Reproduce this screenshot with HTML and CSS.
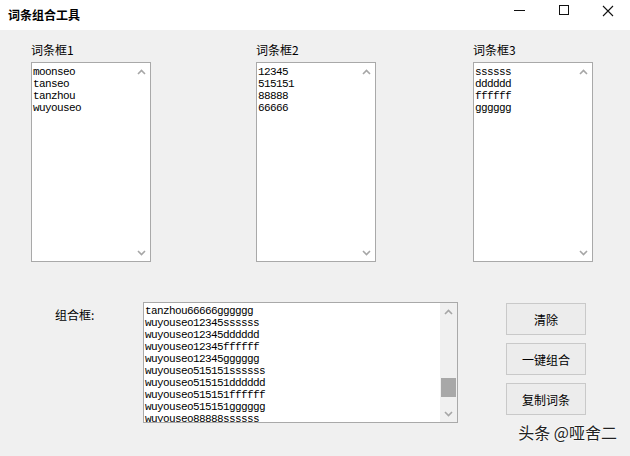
FILE: index.html
```html
<!DOCTYPE html>
<html lang="zh">
<head>
    <meta charset="UTF-8">
    <title>词条组合工具</title>
    <link rel="stylesheet" href="styles.css">
</head>
<body>
<div class="window">
    <div class="titlebar">
        <span class="title">词条组合工具</span>
        <div class="controls">
            <svg width="44" height="30" viewBox="0 0 44 30"><line x1="16" y1="10.5" x2="27" y2="10.5" stroke="#111" stroke-width="1"/></svg>
            <svg width="44" height="30" viewBox="0 0 44 30"><rect x="17.5" y="5.5" width="9" height="9" fill="none" stroke="#111" stroke-width="1"/></svg>
            <svg width="44" height="30" viewBox="0 0 44 30"><path d="M17 6 L27 16 M27 6 L17 16" stroke="#111" stroke-width="1.1"/></svg>
        </div>
    </div>

    <div class="lists">
        <div class="col">
            <div class="label">词条框1</div>
            <div class="box">
                <div class="text">moonseo<br>tanseo<br>tanzhou<br>wuyouseo</div>
                <div class="scroll">
                    <div class="arrow"><svg width="9" height="6" viewBox="0 0 9 6"><path d="M1 5 L4.5 1.5 L8 5" fill="none" stroke="#a6a6a6" stroke-width="1.6"/></svg></div>
                    <div class="track"></div>
                    <div class="arrow"><svg width="9" height="6" viewBox="0 0 9 6"><path d="M1 1 L4.5 4.5 L8 1" fill="none" stroke="#a6a6a6" stroke-width="1.6"/></svg></div>
                </div>
            </div>
        </div>
        <div class="col col2">
            <div class="label">词条框2</div>
            <div class="box">
                <div class="text">12345<br>515151<br>88888<br>66666</div>
                <div class="scroll">
                    <div class="arrow"><svg width="9" height="6" viewBox="0 0 9 6"><path d="M1 5 L4.5 1.5 L8 5" fill="none" stroke="#a6a6a6" stroke-width="1.6"/></svg></div>
                    <div class="track"></div>
                    <div class="arrow"><svg width="9" height="6" viewBox="0 0 9 6"><path d="M1 1 L4.5 4.5 L8 1" fill="none" stroke="#a6a6a6" stroke-width="1.6"/></svg></div>
                </div>
            </div>
        </div>
        <div class="col col3">
            <div class="label">词条框3</div>
            <div class="box">
                <div class="text">ssssss<br>dddddd<br>ffffff<br>gggggg</div>
                <div class="scroll">
                    <div class="arrow"><svg width="9" height="6" viewBox="0 0 9 6"><path d="M1 5 L4.5 1.5 L8 5" fill="none" stroke="#a6a6a6" stroke-width="1.6"/></svg></div>
                    <div class="track"></div>
                    <div class="arrow"><svg width="9" height="6" viewBox="0 0 9 6"><path d="M1 1 L4.5 4.5 L8 1" fill="none" stroke="#a6a6a6" stroke-width="1.6"/></svg></div>
                </div>
            </div>
        </div>
    </div>

    <div class="combine">
        <div class="combo-label">组合框:</div>
        <div class="combo">
            <div class="text">tanzhou66666gggggg<br>wuyouseo12345ssssss<br>wuyouseo12345dddddd<br>wuyouseo12345ffffff<br>wuyouseo12345gggggg<br>wuyouseo515151ssssss<br>wuyouseo515151dddddd<br>wuyouseo515151ffffff<br>wuyouseo515151gggggg<br>wuyouseo88888ssssss</div>
            <div class="scroll">
                <div class="arrow"><svg width="9" height="6" viewBox="0 0 9 6"><path d="M1 5 L4.5 1.5 L8 5" fill="none" stroke="#a6a6a6" stroke-width="1.6"/></svg></div>
                <div class="track"><div class="thumb"></div></div>
                <div class="arrow"><svg width="9" height="6" viewBox="0 0 9 6"><path d="M1 1 L4.5 4.5 L8 1" fill="none" stroke="#a6a6a6" stroke-width="1.6"/></svg></div>
            </div>
        </div>
        <div class="buttons">
            <div class="btn">清除</div>
            <div class="btn">一键组合</div>
            <div class="btn">复制词条</div>
        </div>
    </div>

    <div class="watermark">头条 @哑舍二</div>
</div>
</body>
</html>
```

FILE: styles.css
```css
body {margin: 0; background: #f0f0f0; font-family: "Noto Sans CJK SC", "Noto Sans", sans-serif; font-size: 12px; color: #000;}
.window {position: relative; width: 630px; height: 456px; overflow: hidden;}
.titlebar {height: 30px; background: #fff; display: flex; align-items: center; justify-content: space-between;}
.title {font-weight: bold; font-size: 12px; margin-left: 8px; margin-top: -2px;}
.controls {display: flex;}
.controls svg {display: block;}

.lists {display: flex; padding: 12px 0 0 31px;}
.col {width: 120px;}
.col2 {margin-left: 105px;}
.col3 {margin-left: 97px;}
.label {line-height: 16px; height: 16px; margin-bottom: 4px;}
.box {height: 198px; border: 1px solid #a9a9a9; background: #fff; display: flex;}
.text {flex: 1; padding: 3px 0 0 1px; font-family: "Liberation Mono", monospace; font-size: 11px; letter-spacing: -0.6px; line-height: 12px; overflow: hidden;}
.combo .text {padding-top: 2px;}
.scroll {width: 17px; display: flex; flex-direction: column; background: #f0f0f0;}
.box .scroll {background: #fff;}
.arrow {height: 17px; display: flex; align-items: center; justify-content: center;}
.track {flex: 1; display: flex; flex-direction: column; justify-content: flex-end; align-items: center;}
.thumb {width: 15px; height: 19px; background: #a8a8a8; margin-bottom: 8px;}

.combine {display: flex; padding: 40px 0 0 55px;}
.combo-label {width: 88px; line-height: 16px; margin-top: 5px;}
.combo {width: 313px; height: 119px; border: 1px solid #a9a9a9; background: #fff; display: flex;}
.buttons {margin-left: 48px; padding-top: 1px; display: flex; flex-direction: column; gap: 8px;}
.btn {width: 78px; height: 30px; border: 1px solid #c9c9c9; background: #ececec; display: flex; align-items: center; justify-content: center;}

.watermark {position: absolute; right: 13px; bottom: 12px; font-size: 16px; color: #222; text-shadow: 0 0 2px #fff, 0 0 2px #fff;}
```
